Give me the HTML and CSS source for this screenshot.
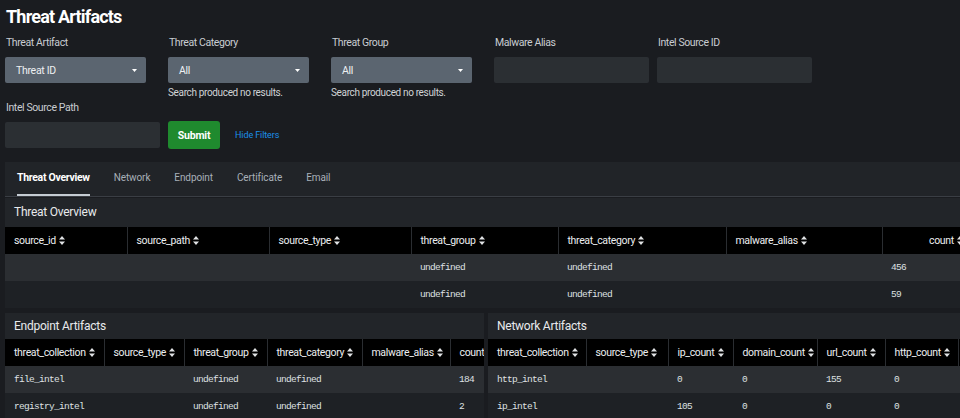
FILE: index.html
```html
<!DOCTYPE html>
<html lang="en">
<head>
<meta charset="utf-8">
<title>Threat Artifacts</title>
<link rel="stylesheet" href="styles.css">
</head>
<body>
<div class="page">
  <h1 class="title">Threat Artifacts</h1>
  <div class="filters">
    <div class="field">
      <label>Threat Artifact</label>
      <div class="select"><span>Threat ID</span><svg class="caret" viewBox="0 0 5 3"><path d="M0 0H5L2.5 3Z"/></svg></div>
    </div>
    <div class="field">
      <label>Threat Category</label>
      <div class="select"><span>All</span><svg class="caret" viewBox="0 0 5 3"><path d="M0 0H5L2.5 3Z"/></svg></div>
      <div class="help">Search produced no results.</div>
    </div>
    <div class="field">
      <label>Threat Group</label>
      <div class="select"><span>All</span><svg class="caret" viewBox="0 0 5 3"><path d="M0 0H5L2.5 3Z"/></svg></div>
      <div class="help">Search produced no results.</div>
    </div>
    <div class="field">
      <label>Malware Alias</label>
      <div class="text-input"></div>
    </div>
    <div class="field">
      <label>Intel Source ID</label>
      <div class="text-input"></div>
    </div>
    <div class="field">
      <label>Intel Source Path</label>
      <div class="text-input"></div>
    </div>
    <button class="submit">Submit</button>
    <a class="hide-filters">Hide Filters</a>
  </div>

  <div class="tabs">
    <div class="tab active">Threat Overview</div>
    <div class="tab">Network</div>
    <div class="tab">Endpoint</div>
    <div class="tab">Certificate</div>
    <div class="tab">Email</div>
  </div>

  <div class="panel overview">
    <div class="panel-head">Threat Overview</div>
    <table class="tbl t-over">
      <colgroup><col class="w122"><col class="w142"><col class="w142"><col class="w147"><col class="w168"><col class="w156"><col class="w90"></colgroup>
      <thead>
        <tr>
          <th>source_id <svg class="sort" viewBox="0 0 6 9"><path d="M0 3.5L3 0L6 3.5Z M0 5.5H6L3 9Z"/></svg></th>
          <th>source_path <svg class="sort" viewBox="0 0 6 9"><path d="M0 3.5L3 0L6 3.5Z M0 5.5H6L3 9Z"/></svg></th>
          <th>source_type <svg class="sort" viewBox="0 0 6 9"><path d="M0 3.5L3 0L6 3.5Z M0 5.5H6L3 9Z"/></svg></th>
          <th>threat_group <svg class="sort" viewBox="0 0 6 9"><path d="M0 3.5L3 0L6 3.5Z M0 5.5H6L3 9Z"/></svg></th>
          <th>threat_category <svg class="sort" viewBox="0 0 6 9"><path d="M0 3.5L3 0L6 3.5Z M0 5.5H6L3 9Z"/></svg></th>
          <th>malware_alias <svg class="sort" viewBox="0 0 6 9"><path d="M0 3.5L3 0L6 3.5Z M0 5.5H6L3 9Z"/></svg></th>
          <th class="num">count <svg class="sort" viewBox="0 0 6 9"><path d="M0 3.5L3 0L6 3.5Z M0 5.5H6L3 9Z"/></svg></th>
        </tr>
      </thead>
      <tbody>
        <tr class="odd"><td></td><td></td><td></td><td>undefined</td><td>undefined</td><td></td><td>456</td></tr>
        <tr class="even"><td></td><td></td><td></td><td>undefined</td><td>undefined</td><td></td><td>59</td></tr>
      </tbody>
    </table>
  </div>

  <div class="split">
    <div class="panel endpoint">
      <div class="panel-head">Endpoint Artifacts</div>
      <table class="tbl t-end">
        <colgroup><col class="w99"><col class="w80"><col class="w83"><col class="w95"><col class="w88"><col class="w51"></colgroup>
        <thead>
          <tr>
            <th>threat_collection <svg class="sort" viewBox="0 0 6 9"><path d="M0 3.5L3 0L6 3.5Z M0 5.5H6L3 9Z"/></svg></th>
            <th>source_type <svg class="sort" viewBox="0 0 6 9"><path d="M0 3.5L3 0L6 3.5Z M0 5.5H6L3 9Z"/></svg></th>
            <th>threat_group <svg class="sort" viewBox="0 0 6 9"><path d="M0 3.5L3 0L6 3.5Z M0 5.5H6L3 9Z"/></svg></th>
            <th>threat_category <svg class="sort" viewBox="0 0 6 9"><path d="M0 3.5L3 0L6 3.5Z M0 5.5H6L3 9Z"/></svg></th>
            <th>malware_alias <svg class="sort" viewBox="0 0 6 9"><path d="M0 3.5L3 0L6 3.5Z M0 5.5H6L3 9Z"/></svg></th>
            <th class="num">count <svg class="sort" viewBox="0 0 6 9"><path d="M0 3.5L3 0L6 3.5Z M0 5.5H6L3 9Z"/></svg></th>
          </tr>
        </thead>
        <tbody>
          <tr class="odd"><td>file_intel</td><td></td><td>undefined</td><td>undefined</td><td></td><td>184</td></tr>
          <tr class="even"><td>registry_intel</td><td></td><td>undefined</td><td>undefined</td><td></td><td>2</td></tr>
        </tbody>
      </table>
    </div>
    <div class="panel network">
      <div class="panel-head">Network Artifacts</div>
      <table class="tbl t-net">
        <colgroup><col class="w98"><col class="w82"><col class="w65"><col class="w84"><col class="w68"><col class="w73"><col class="w90"></colgroup>
        <thead>
          <tr>
            <th>threat_collection <svg class="sort" viewBox="0 0 6 9"><path d="M0 3.5L3 0L6 3.5Z M0 5.5H6L3 9Z"/></svg></th>
            <th>source_type <svg class="sort" viewBox="0 0 6 9"><path d="M0 3.5L3 0L6 3.5Z M0 5.5H6L3 9Z"/></svg></th>
            <th>ip_count <svg class="sort" viewBox="0 0 6 9"><path d="M0 3.5L3 0L6 3.5Z M0 5.5H6L3 9Z"/></svg></th>
            <th>domain_count <svg class="sort" viewBox="0 0 6 9"><path d="M0 3.5L3 0L6 3.5Z M0 5.5H6L3 9Z"/></svg></th>
            <th>url_count <svg class="sort" viewBox="0 0 6 9"><path d="M0 3.5L3 0L6 3.5Z M0 5.5H6L3 9Z"/></svg></th>
            <th>http_count <svg class="sort" viewBox="0 0 6 9"><path d="M0 3.5L3 0L6 3.5Z M0 5.5H6L3 9Z"/></svg></th>
            <th>cert_count <svg class="sort" viewBox="0 0 6 9"><path d="M0 3.5L3 0L6 3.5Z M0 5.5H6L3 9Z"/></svg></th>
          </tr>
        </thead>
        <tbody>
          <tr class="odd"><td>http_intel</td><td></td><td>0</td><td>0</td><td>155</td><td>0</td><td>0</td></tr>
          <tr class="even"><td>ip_intel</td><td></td><td>105</td><td>0</td><td>0</td><td>0</td><td>0</td></tr>
        </tbody>
      </table>
    </div>
  </div>
</div>
</body>
</html>
```
FILE: styles.css
```css
* { box-sizing: border-box; }
html, body { margin: 0; background: #1a1c20; }
body {
  width: 960px;
  height: 418px;
  overflow: hidden;
  font-family: Roboto, "Liberation Sans", sans-serif;
  color: #e4e6e8;
}
.page { padding-left: 5px; }

.title {
  margin: 0 0 8px 1px;
  padding-top: 6px;
  font-size: 18px;
  line-height: 22px;
  font-weight: 700;
  color: #ffffff;
  letter-spacing: -0.8px;
}

.filters {
  display: flex;
  flex-wrap: wrap;
  align-items: flex-start;
  row-gap: 2px;
}
.field { width: 163px; }
.field label {
  display: block;
  margin: 0 0 7px 1px;
  font-size: 10.5px;
  line-height: 14px;
  color: #c9cdd2;
  letter-spacing: -0.4px;
}
.select {
  width: 141px;
  height: 26px;
  padding: 0 9px 0 11px;
  display: flex;
  align-items: center;
  justify-content: space-between;
  background: #5b6570;
  border-radius: 2px;
  font-size: 10.5px;
  color: #eef0f2;
  letter-spacing: -0.3px;
}
.caret { width: 5px; height: 3px; fill: #ffffff; }
.text-input {
  width: 155px;
  height: 26px;
  background: #2b2f33;
  border-radius: 2px;
}
.help {
  margin-top: 3px;
  font-size: 10px;
  line-height: 13px;
  color: #d0d3d6;
  letter-spacing: -0.35px;
}
.submit {
  align-self: flex-end;
  margin: 0 15px -1px 0;
  width: 52px;
  height: 28px;
  padding: 0;
  border: 0;
  border-radius: 3px;
  background: #1f8a2e;
  color: #ffffff;
  font-family: Roboto, "Liberation Sans", sans-serif;
  font-size: 10.5px;
  font-weight: 700;
  letter-spacing: -0.2px;
}
.hide-filters {
  align-self: flex-end;
  line-height: 26px;
  font-size: 9px;
  color: #1a90ea;
  letter-spacing: -0.1px;
}

.tabs {
  display: flex;
  margin-top: 14px;
  height: 35px;
  padding-left: 12px;
  background: #212428;
  border-bottom: 1px solid #3a3e44;
}
.tab {
  margin-right: 24px;
  line-height: 32px;
  font-size: 10px;
  color: #a8b0b8;
  border-bottom: 2px solid transparent;
  letter-spacing: -0.1px;
}
.tab.active {
  color: #ffffff;
  font-size: 10.5px;
  font-weight: 700;
  border-bottom-color: #c5ccd3;
  letter-spacing: -0.3px;
}

.panel {
  background: #222529;
  overflow: hidden;
}
.panel-head {
  height: 29px;
  padding-left: 9px;
  line-height: 29px;
  font-size: 12px;
  color: #e8eaec;
  letter-spacing: -0.25px;
}
.overview { margin-top: 1px; }
.endpoint .panel-head, .network .panel-head { height: 26px; line-height: 26px; }

.tbl {
  border-collapse: collapse;
  table-layout: fixed;
}
.t-over { width: 967px; }
.t-end { width: 496px; }
.t-net { width: 560px; }
.tbl th {
  height: 27px;
  padding: 0 9px;
  background: #000000;
  text-align: left;
  font-weight: 400;
  font-size: 10.5px;
  color: #eceef0;
  white-space: nowrap;
  overflow: hidden;
  letter-spacing: -0.35px;
}
.tbl th + th { border-left: 1px solid #2a2d31; }
.tbl th.num { text-align: right; }
.tbl td {
  height: 27px;
  padding: 0 9px;
  font-family: "Liberation Mono", "DejaVu Sans Mono", monospace;
  font-size: 9.5px;
  letter-spacing: -0.7px;
  color: #dfe1e3;
  white-space: nowrap;
  overflow: hidden;
}
.tbl tr.odd td { background: #2b2e32; }
.tbl tr.even td { background: #1e2125; }
.sort {
  width: 6px;
  height: 9px;
  margin-left: 1px;
  fill: #e0e2e4;
  vertical-align: -1px;
}

.w51 { width: 51px; }
.w65 { width: 65px; }
.w68 { width: 68px; }
.w73 { width: 73px; }
.w80 { width: 80px; }
.w82 { width: 82px; }
.w83 { width: 83px; }
.w84 { width: 84px; }
.w88 { width: 88px; }
.w90 { width: 90px; }
.w95 { width: 95px; }
.w98 { width: 98px; }
.w99 { width: 99px; }
.w122 { width: 122px; }
.w142 { width: 142px; }
.w147 { width: 147px; }
.w156 { width: 156px; }
.w168 { width: 168px; }

.split {
  display: flex;
  gap: 4px;
  margin-top: 5px;
}
.endpoint { width: 479px; flex: none; }
.network { flex: 1; min-width: 0; }
```
